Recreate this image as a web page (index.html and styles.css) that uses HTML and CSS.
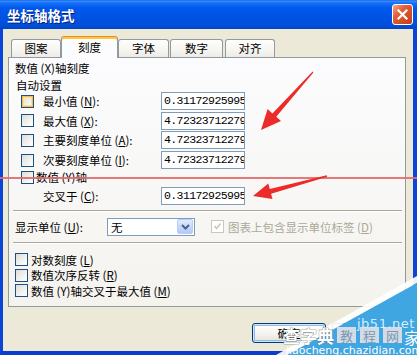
FILE: index.html
```html
<!DOCTYPE html>
<html lang="zh-CN">
<head>
<meta charset="utf-8">
<title>坐标轴格式</title>
<link rel="stylesheet" href="styles.css">
</head>
<body>
<div class="window">
  <div class="titlebar">
    <span class="title">坐标轴格式</span>
    <span class="close"><svg width="19" height="19" viewBox="0 0 19 19"><path d="M5.5 5.5 L13.5 13.5 M13.5 5.5 L5.5 13.5" stroke="#fff" stroke-width="2.2" stroke-linecap="square"/></svg></span>
  </div>
  <div class="frame">
    <div class="client">
      <div class="tabs">
        <div class="tab t1">图案</div>
        <div class="tab t2 active">刻度</div>
        <div class="tab t3">字体</div>
        <div class="tab t4">数字</div>
        <div class="tab t5">对齐</div>
      </div>
      <div class="panel">
        <div class="heading">数值 (X)轴刻度</div>
        <div class="subheading">自动设置</div>
        <div class="scale-grid">
          <span class="cb hover"></span><span class="label">最小值 (<u>N</u>):</span><span class="field">0.31172925995</span>
          <span class="cb"></span><span class="label">最大值 (<u>X</u>):</span><span class="field">4.72323712279517</span>
          <span class="cb"></span><span class="label">主要刻度单位 (<u>A</u>):</span><span class="field">4.72323712279517</span>
          <span class="cb"></span><span class="label">次要刻度单位 (<u>I</u>):</span><span class="field">4.72323712279517</span>
          <div class="axis"><span class="cb"></span><span class="label">数值 (Y)轴</span></div>
          <span></span><span class="label">交叉于 (<u>C</u>):</span><span class="field">0.31172925995</span>
        </div>
        <div class="sep"></div>
        <div class="unit-row">
          <span class="unit-label">显示单位 (<u>U</u>):</span>
          <div class="select">
            <span>无</span>
            <span class="select-btn"><svg width="9" height="6" viewBox="0 0 9 6"><path d="M1 1 L4.5 4.5 L8 1" fill="none" stroke="#4d6185" stroke-width="2"/></svg></span>
          </div>
          <span class="cb disabled"><svg width="11" height="11" viewBox="0 0 11 11"><path d="M2.5 5 L4.5 7.5 L8.5 2.5" fill="none" stroke="#cac8bb" stroke-width="1.6"/></svg></span>
          <span class="disabled-label">图表上包含显示单位标签 (<u>D</u>)</span>
        </div>
        <div class="sep sep2"></div>
        <div class="checks">
          <div class="check-row"><span class="cb"></span><span class="label">对数刻度 (<u>L</u>)</span></div>
          <div class="check-row"><span class="cb"></span><span class="label">数值次序反转 (<u>R</u>)</span></div>
          <div class="check-row"><span class="cb"></span><span class="label">数值 (Y)轴交叉于最大值 (<u>M</u>)</span></div>
        </div>
      </div>
      <div class="buttons">
        <button class="btn default">确定</button>
        <button class="btn">取消</button>
      </div>
    </div>
  </div>
</div>
<svg class="overlay" width="417" height="355" viewBox="0 0 417 355">
  <rect x="0" y="177" width="417" height="2" fill="#e26a6a" opacity="0.9"/>
  <polygon fill="#ec2b2b" points="313.4,72.4 276.2,116.8 281,121.1 261,130 267.6,109.1 272.4,113.4 312.6,71.6"/>
  <polygon fill="#ec2b2b" points="327.2,176.7 271.1,193.7 272.5,199 253,196 268.3,183.6 269.8,188.9 326.8,175.3"/>
  <polygon fill="#ffffff" opacity="0.92" points="276,355 417,276 417,283 287,355"/>
  <polygon fill="#3fa6e2" points="287,355 417,283 417,355"/>
  <text x="283" y="343" class="wm-big">查字典</text>
  <rect x="337" y="327" width="19" height="16" fill="#d3dce6"/>
  <rect x="360" y="327" width="19" height="16" fill="#d3dce6"/>
  <rect x="383" y="327" width="19" height="16" fill="#d3dce6"/>
  <text x="340" y="341" class="wm-box">教</text>
  <text x="363" y="341" class="wm-box">程</text>
  <text x="386" y="341" class="wm-box">网</text>
  <text x="404" y="344" class="wm-jia">家</text>
  <text x="357" y="328" class="wm-jb">jb51.net</text>
  <text x="286" y="354" class="wm-url">jiaocheng.chazidian.com</text>
</svg>
</body>
</html>
```
FILE: styles.css
```css
* { box-sizing: border-box; }
html, body { margin: 0; padding: 0; }
body {
  width: 417px;
  height: 355px;
  overflow: hidden;
  position: relative;
  font-family: "Noto Sans CJK SC", "Noto Sans", sans-serif;
  font-size: 11.5px;
  color: #000;
  background: #ece9d8;
}
.window { width: 417px; height: 355px; display: flex; flex-direction: column; }
.titlebar {
  height: 29px;
  flex: none;
  display: flex;
  align-items: center;
  justify-content: space-between;
  padding: 0 4px 0 7px;
  background: linear-gradient(#0a5ff0 0, #3d8ff8 1px, #1470f6 3px, #0058ee 8px, #0054e3 16px, #0050dc 24px, #0046c8 29px);
}
.title { color: #fff; font-weight: bold; font-size: 13.5px; text-shadow: 1px 1px 0 #0a1f7a; }
.close {
  width: 21px; height: 21px;
  border: 1px solid #fff;
  border-radius: 3px;
  background: linear-gradient(135deg, #f3a98f 0%, #e2603a 35%, #d24a22 70%, #c33d1b 100%);
  display: flex; align-items: center; justify-content: center;
}
.close svg { display: block; }
.frame {
  flex: 1;
  display: flex;
  border-left: 3px solid #0a44d8;
  border-right: 4px solid #0a44d8;
  border-bottom: 4px solid #0a3cd0;
}
.client {
  flex: 1;
  background: #ece9d8;
  padding: 7px 7px 0 5px;
  display: flex;
  flex-direction: column;
}
.tabs { display: flex; align-items: flex-end; height: 21px; padding-left: 3px; flex: none; }
.tab {
  height: 18px;
  border: 1px solid #919b9c;
  border-bottom: none;
  border-radius: 3px 3px 0 0;
  background: linear-gradient(#fefefe, #f6f5f1 60%, #ecebe5);
  display: flex; align-items: center; justify-content: center;
  line-height: 1;
}
.t1 { width: 50px; }
.t2 { width: 57px; }
.t3 { width: 51px; }
.t4 { width: 53px; margin-left: 1px; }
.t5 { width: 50px; margin-left: 2px; }
.tab.active {
  height: 22px;
  margin-bottom: -1px;
  border-top: 1px solid #e68b2c;
  box-shadow: inset 0 2px 0 #ffc73c;
  background: #fcfcfe;
  position: relative;
  z-index: 1;
}
.panel {
  height: 250px;
  flex: none;
  border: 1px solid #919b9c;
  background: linear-gradient(#fcfcfe, #f4f3ee);
  padding: 0 3px 0 6px;
  display: flex;
  flex-direction: column;
}
.heading { margin-top: 2px; line-height: 16px; height: 16px; white-space: nowrap; }
.subheading { margin-top: 2px; margin-left: 1px; line-height: 14px; height: 14px; }
.scale-grid {
  display: grid;
  grid-template-columns: 22px 118px 84px;
  grid-template-rows: 18px 18px 18px 18px 14.5px 18px;
  row-gap: 1.7px;
  margin-left: 6px;
  align-items: center;
}
.label { line-height: 14px; white-space: nowrap; }
.axis { grid-column: 1 / -1; align-self: start; display: flex; align-items: center; gap: 2px; height: 13px; }
.field {
  height: 18px;
  border: 1px solid #7f9db9;
  background: #fff;
  font-family: "Liberation Mono", monospace;
  font-size: 11.5px;
  letter-spacing: -0.6px;
  line-height: 16px;
  padding-left: 2px;
  overflow: hidden;
  white-space: nowrap;
}
.cb {
  width: 13px; height: 13px; flex: none;
  border: 1px solid #1c5180;
  background: linear-gradient(135deg, #dcdcd7 0%, #f6f6f3 70%, #fff 100%);
  display: block;
}
.cb.hover { box-shadow: inset 0 0 0 1px #f9bd4b, inset 0 0 0 2px #fddf9c; }
.cb.disabled { border-color: #cac8bb; background: #fff; display: flex; align-items: center; justify-content: center; }
.sep { height: 0; border-top: 1px solid #aca899; border-bottom: 1px solid #fff; margin: 5px 0 0 -2px; flex: none; }
.sep2 { margin-top: 6px; }
.unit-row { display: flex; align-items: center; height: 18px; margin-top: 6px; flex: none; }
.unit-label { width: 92px; white-space: nowrap; line-height: 14px; }
.select {
  width: 88px; height: 18px;
  border: 1px solid #7f9db9;
  background: #fff;
  display: flex; align-items: center; justify-content: space-between;
  padding: 0 1px 0 3px;
}
.select-btn {
  width: 16px; height: 15px;
  border: 1px solid #b9cdf5;
  border-radius: 2px;
  background: linear-gradient(#e3ebfd, #c3d5fb 60%, #b3c9f6);
  display: flex; align-items: center; justify-content: center;
}
.select-btn svg, .cb svg { display: block; }
.unit-row .cb { margin-left: 16px; }
.disabled-label { margin-left: 4px; color: #aca899; white-space: nowrap; line-height: 14px; }
.checks { margin-top: 8px; display: flex; flex-direction: column; }
.check-row { height: 15.5px; display: flex; align-items: center; gap: 3px; }
.buttons { margin-top: 16px; display: flex; justify-content: flex-end; gap: 6px; flex: none; }
.btn {
  width: 74px; height: 20px;
  border: 1px solid #003c74;
  border-radius: 3px;
  background: linear-gradient(#ffffff, #f3f2ed 60%, #e4e1d6);
  font-family: "Noto Sans CJK SC", sans-serif;
  font-size: 11.5px;
  color: #000;
  padding: 0;
  line-height: 16px;
}
.btn.default { box-shadow: inset 0 0 0 1px #cee7ff, inset 0 0 0 2px #98b8ea; }
.overlay { position: absolute; left: 0; top: 0; pointer-events: none; }
.wm-big { font-family: "Noto Sans CJK SC", sans-serif; font-size: 17px; font-weight: bold; fill: #ffffff; stroke: #6a6a6a; stroke-width: 0.6px; paint-order: stroke; }
.wm-box { font-family: "Noto Sans CJK SC", sans-serif; font-size: 13px; fill: #7d96b0; }
.wm-jia { font-family: "Noto Sans CJK SC", sans-serif; font-size: 16px; fill: #ffffff; }
.wm-jb { font-family: "DejaVu Sans", sans-serif; font-size: 13px; fill: #d4ecfa; letter-spacing: 0.5px; }
.wm-url { font-family: "DejaVu Sans", sans-serif; font-size: 11px; fill: #ffffff; }
```
